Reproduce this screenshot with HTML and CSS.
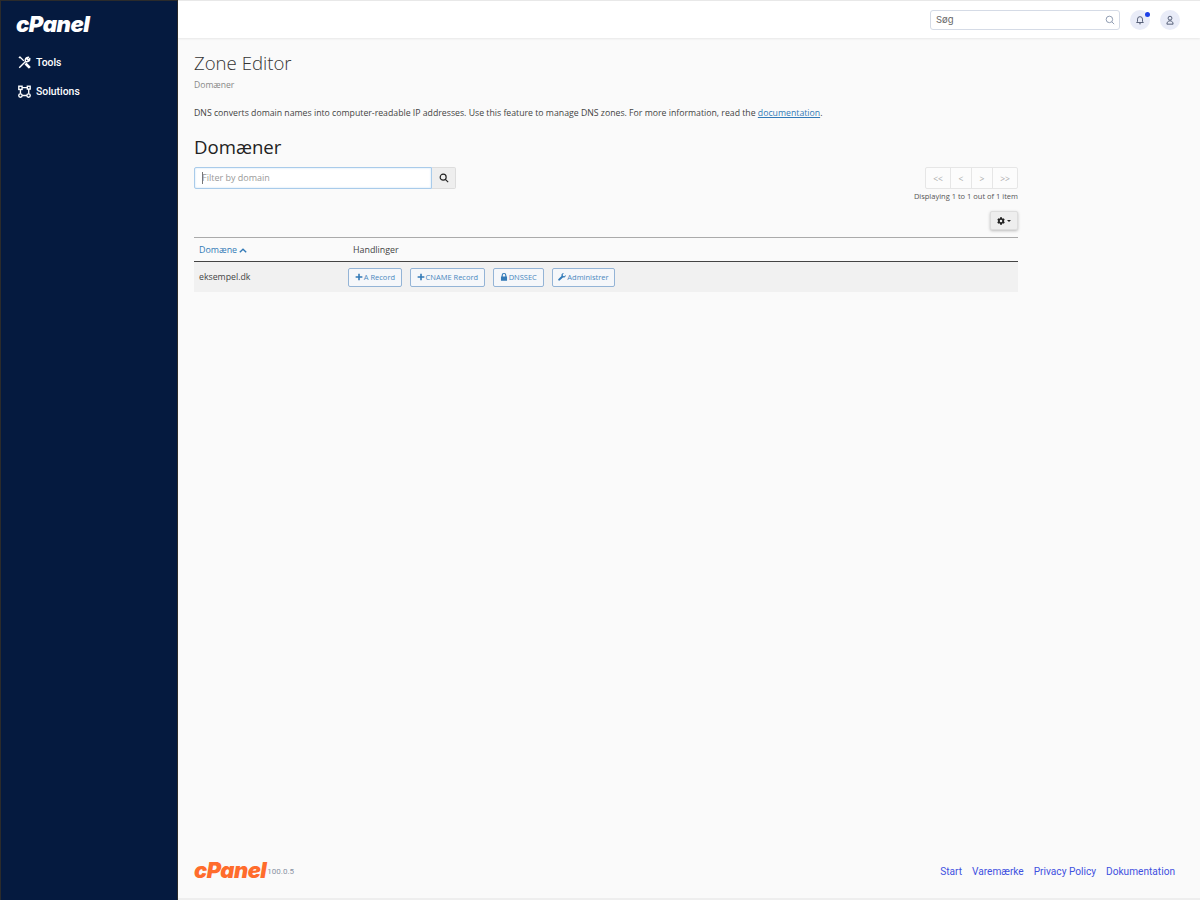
FILE: index.html
```html
<!DOCTYPE html>
<html lang="da">
<head>
<meta charset="utf-8">
<title>Zone Editor</title>
<link rel="stylesheet" href="styles.css">
</head>
<body>
<div class="app">
  <aside class="sidebar">
    <div class="logo">cPanel</div>
    <nav class="nav">
      <a class="nav-item">
        <svg class="nav-icon" viewBox="0 0 16 16" fill="none" stroke="#fff" stroke-width="1.7" stroke-linejoin="round"><path d="M1.5 14.5 9 7"/><path d="M9.2 6.8C8.2 4 9.8 1.2 13 1.4L10.8 3.6 12.4 5.2 14.6 3C14.8 6.2 12 7.8 9.2 6.8Z"/><path d="M1.2 2.4 2.4 1.2 7.2 6M9.8 8.6 14.6 13.4 13.4 14.6 8.6 9.8"/></svg>
        <span>Tools</span>
      </a>
      <a class="nav-item">
        <svg class="nav-icon" viewBox="0 0 16 16" fill="none" stroke="#fff" stroke-width="1.7"><rect x="1" y="1.5" width="4" height="4"/><rect x="11.5" y="1.5" width="3.5" height="3.5"/><circle cx="3" cy="13" r="2.1"/><circle cx="13" cy="13" r="2.1"/><path d="M5 3.2H11.5M3 5.5V10.9M13.2 5V10.9M5.1 13H10.9"/></svg>
        <span>Solutions</span>
      </a>
    </nav>
  </aside>
  <div class="main">
    <header class="topbar">
      <div class="search">
        <span class="search-text">Søg</span>
        <svg class="search-icon" viewBox="0 0 12 12" fill="none" stroke="#7c8aa3" stroke-width="1"><circle cx="5.3" cy="5.3" r="3.9"/><path d="M8.2 8.2 11 11"/></svg>
      </div>
      <button class="round-btn">
        <svg viewBox="0 0 12 12" fill="none" stroke="#3b4660" stroke-width="1"><path d="M2 9h8L9 7.6V5a3 3 0 0 0-6 0v2.6Z"/><path d="M5 10.5h2"/></svg>
        <span class="dot"></span>
      </button>
      <button class="round-btn">
        <svg viewBox="0 0 12 12" fill="none" stroke="#3b4660" stroke-width="1"><circle cx="6" cy="3.8" r="2.3"/><path d="M2.3 11c0-2.5 1.5-4 3.7-4s3.7 1.5 3.7 4Z"/></svg>
      </button>
    </header>
    <main class="content">
      <h1 class="title">Zone Editor</h1>
      <div class="crumb">Domæner</div>
      <p class="intro">DNS converts domain names into computer-readable IP addresses. Use this feature to manage DNS zones. For more information, read the <a class="link">documentation</a>.</p>
      <h2 class="section">Domæner</h2>
      <div class="toolbar">
        <div class="filter">
          <div class="filter-input"><span class="caret"></span>Filter by domain</div>
          <div class="filter-btn">
            <svg viewBox="0 0 12 12" fill="none" stroke="#222" stroke-width="1.4"><circle cx="5" cy="5" r="3.6"/><path d="M7.6 7.6 11 11"/></svg>
          </div>
        </div>
        <div class="paging">
          <div class="pager"><span class="pg pg-first">&lt;&lt;</span><span class="pg">&lt;</span><span class="pg">&gt;</span><span class="pg pg-last">&gt;&gt;</span></div>
          <div class="count">Displaying 1 to 1 out of 1 item</div>
        </div>
      </div>
      <div class="settings-row">
        <div class="gear-btn">
          <svg viewBox="0 0 512 512" fill="#222"><path d="M487 316l-42-25a190 190 0 0 0 0-70l42-25c5-3 7-8 5-14-11-35-30-67-54-93-4-4-10-5-15-2l-42 25a187 187 0 0 0-61-35V28c0-6-4-10-9-11-36-8-73-8-107 0-5 1-9 5-9 11v49a187 187 0 0 0-61 35L92 87c-5-3-11-2-15 2-24 26-43 58-54 93-2 6 0 11 5 14l42 25a190 190 0 0 0 0 70l-42 25c-5 3-7 8-5 14 11 35 30 67 54 93 4 4 10 5 15 2l42-25a187 187 0 0 0 61 35v49c0 6 4 10 9 11 36 8 73 8 107 0 5-1 9-5 9-11v-49a187 187 0 0 0 61-35l42 25c5 3 11 2 15-2 24-26 43-58 54-93 2-6 0-11-5-14zM256 336a80 80 0 1 1 0-160 80 80 0 0 1 0 160z"/></svg>
          <span class="gear-caret"></span>
        </div>
      </div>
      <table class="table">
        <thead>
          <tr>
            <th class="col-domain"><a class="sort">Domæne <svg class="sort-icon" viewBox="0 0 10 6" fill="none" stroke="#337ab7" stroke-width="1.7"><path d="M1 5.2 5 1.3 9 5.2"/></svg></a></th>
            <th>Handlinger</th>
          </tr>
        </thead>
        <tbody>
          <tr>
            <td class="col-domain">eksempel.dk</td>
            <td class="actions">
              <a class="action"><svg viewBox="0 0 10 10" fill="#337ab7"><path d="M4 .8h2V4h3.2v2H6v3.2H4V6H.8V4H4Z"/></svg>A Record</a>
              <a class="action"><svg viewBox="0 0 10 10" fill="#337ab7"><path d="M4 .8h2V4h3.2v2H6v3.2H4V6H.8V4H4Z"/></svg>CNAME Record</a>
              <a class="action"><svg viewBox="0 0 10 10" fill="#337ab7"><path d="M1.2 4.4h.8V3a3 3 0 0 1 6 0v1.4h.8V9.6H1.2ZM3.4 4.4h3.2V3a1.6 1.6 0 0 0-3.2 0Z" fill-rule="evenodd"/></svg>DNSSEC</a>
              <a class="action"><svg viewBox="0 0 10 10" fill="#337ab7"><path d="M9.6 2.4 8 4 6.2 3.6 5.9 1.9 7.5.4C6 0 4.5.7 4.3 2.2c-.1.5 0 1 .1 1.4L.6 7.4c-.6.6-.6 1.3-.1 1.8.5.6 1.3.6 1.9 0l3.8-3.7c1.9.6 3.9-1 3.4-3.1Z"/></svg>Administrer</a>
            </td>
          </tr>
        </tbody>
      </table>
    </main>
    <footer class="footer">
      <div class="brand"><span class="brand-logo">cPanel</span><span class="version">100.0.5</span></div>
      <div class="foot-links"><a>Start</a><a>Varemærke</a><a>Privacy Policy</a><a>Dokumentation</a></div>
    </footer>
  </div>
</div>
</body>
</html>
```

FILE: styles.css
```css
* { box-sizing: border-box; }
html, body { margin: 0; height: 100%; }
body { font-family: "Open Sans", sans-serif; color: #444; background: #fafafa; overflow: hidden; }
.app { display: flex; height: 900px; }
.sidebar { width: 178px; flex: none; background: #051a3f; border: 1px solid #2b2b2b; border-bottom: none; color: #fff; padding: 10px 0 0 15px; }
.logo { font-family: "Inter", sans-serif; font-weight: 900; font-style: italic; font-size: 22.2px; line-height: 26px; letter-spacing: -0.5px; color: #fff; }
.nav { margin-top: 15px; display: flex; flex-direction: column; gap: 9px; }
.nav-item { display: flex; align-items: center; gap: 5px; height: 20px; font-family: "Roboto", sans-serif; font-weight: 500; font-size: 10.4px; color: #fff; padding-left: 2px; }
.nav-icon { width: 13px; height: 13px; flex: none; }
.main { flex: 1; min-width: 0; display: flex; flex-direction: column; }
.topbar { height: 38px; flex: none; background: #fff; border-top: 1px solid #e8e8e8; box-shadow: 0 1px 2px rgba(0,0,0,.08); display: flex; align-items: center; justify-content: flex-end; padding: 0 20px 0 0; gap: 10px; }
.search { width: 190px; height: 20px; background: #fff; border: 1px solid #d5dbe6; border-radius: 3px; display: flex; align-items: center; justify-content: space-between; padding: 0 4px 0 5px; font-family: "Inter", sans-serif; font-size: 9.5px; color: #666; }
.search-icon { width: 10px; height: 10px; }
.round-btn { position: relative; width: 20px; height: 20px; border: none; border-radius: 50%; background: #e9ecf8; padding: 5px; }
.round-btn svg { display: block; width: 10px; height: 10px; }
.dot { position: absolute; top: 2px; right: 0; width: 5px; height: 5px; border-radius: 50%; background: #1d40e8; }
.content { flex: 1; width: 840px; padding: 0 0 0 16px; }
.title { margin: 13px 0 0; font-size: 18.6px; font-weight: 300; line-height: 24px; color: #333; }
.crumb { margin-top: 4px; font-size: 8.6px; line-height: 12px; color: #888; }
.intro { margin: 15px 0 0; font-size: 8.72px; line-height: 14px; color: #444; white-space: nowrap; }
.link { color: #337ab7; text-decoration: underline; }
.section { margin: 15px 0 0; font-size: 18.6px; font-weight: 400; line-height: 24px; color: #222; }
.toolbar { margin-top: 8px; display: flex; justify-content: space-between; align-items: flex-start; }
.filter { display: flex; }
.filter-input { width: 238px; height: 22px; background: #fff; border: 1px solid #a9cbea; border-radius: 2px 0 0 2px; box-shadow: inset 0 0 2px rgba(102,175,233,.4); font-size: 9px; line-height: 20px; color: #999; padding-left: 7px; position: relative; }
.caret { position: absolute; left: 7px; top: 4px; width: 1px; height: 12px; background: #777; }
.filter-btn { width: 24px; height: 22px; background: #eee; border: 1px solid #ddd; border-left: none; border-radius: 0 2px 2px 0; display: flex; align-items: center; justify-content: center; }
.filter-btn svg { width: 10px; height: 10px; }
.paging { display: flex; flex-direction: column; align-items: flex-end; }
.pager { display: flex; height: 22px; border: 1px solid #e6e6e6; border-radius: 2px; background: #fcfcfc; }
.pg { display: flex; align-items: center; justify-content: center; width: 21px; font-size: 8.5px; color: #aaa; border-left: 1px solid #e6e6e6; }
.pg-first { width: 24px; border-left: none; }
.pg-last { width: 25px; }
.count { margin-top: 1px; font-size: 7.5px; line-height: 12px; color: #555; }
.settings-row { margin-top: 9px; display: flex; justify-content: flex-end; }
.gear-btn { width: 28px; height: 19px; background: #eee; border: 1px solid #ddd; border-radius: 2px; box-shadow: 0 1px 3px rgba(0,0,0,.25); display: flex; align-items: center; justify-content: center; gap: 2px; }
.gear-btn svg { width: 8px; height: 8px; }
.gear-caret { width: 0; height: 0; border: 2px solid transparent; border-top-color: #222; border-bottom: none; }
.table { width: 100%; margin-top: 7px; border-collapse: collapse; font-size: 8.9px; }
.table th { height: 24px; padding: 0 0 0 5px; font-weight: 400; text-align: left; border-top: 1px solid #aaa; border-bottom: 1px solid #444; color: #444; }
.col-domain { width: 154px; }
.sort { color: #337ab7; }
.sort-icon { width: 8px; height: 5px; }
.table td { height: 30px; padding: 0 0 0 5px; background: #f1f1f1; color: #444; font-size: 8.75px; }
.table td.actions { display: flex; align-items: center; gap: 8px; padding: 0; }
.action { display: flex; align-items: center; gap: 1px; height: 19px; padding: 0 5.75px; background: #f5f7fa; border: 1px solid #94b4d6; border-radius: 2px; color: #4a88c0; font-size: 7.5px; }
.action svg { width: 8px; height: 8px; flex: none; }
.footer { flex: none; height: 56px; display: flex; justify-content: space-between; align-items: flex-start; padding: 14px 25px 0 16px; border-bottom: 2px solid #eee; }
.brand { display: flex; align-items: flex-end; gap: 1px; }
.brand-logo { font-family: "Inter", sans-serif; font-weight: 900; font-style: italic; font-size: 21.9px; line-height: 24px; letter-spacing: -0.5px; color: #ff6c2c; }
.version { font-family: "Roboto", sans-serif; font-size: 8px; line-height: 21px; color: #8a93a3; }
.foot-links { display: flex; gap: 10px; margin-top: 6px; font-family: "Roboto", sans-serif; font-size: 10.15px; line-height: 16px; color: #3f51e0; }
```
